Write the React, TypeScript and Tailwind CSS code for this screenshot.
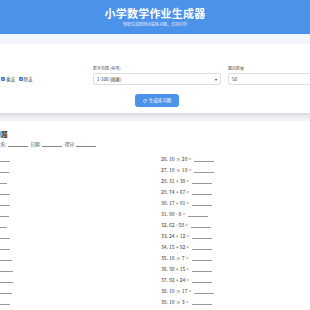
import { RotateCw } from "lucide-react"

const font = { fontFamily: '"Noto Sans CJK SC", "Noto Sans", sans-serif' }

const ops = ["加法", "减法", "乘法", "除法"]

const questions: string[] = [
  "12 + 35", "48 - 19", "7 × 8", "56 ÷ 7", "23 + 64",
  "81 - 27", "9 × 6", "45 + 38", "72 ÷ 8", "66 - 41",
  "14 × 5", "39 + 47", "90 - 36", "8 × 9", "27 + 58",
  "63 ÷ 9", "55 - 18", "16 × 4", "32 + 49", "84 - 29",
  "6 × 7", "21 + 76", "48 ÷ 6", "70 - 45", "13 × 3",
  "10 × 20", "19 × 18", "31 + 38", "74 + 67", "17 + 91",
  "90 - 8", "62 - 58", "24 + 12", "15 + 92", "18 × 7",
  "30 + 15", "92 + 24", "19 × 17", "10 × 3", "44 - 26",
  "51 + 33", "12 × 6", "88 - 47", "36 ÷ 4", "25 + 69",
  "73 - 38", "11 × 9", "64 + 27", "95 - 59", "40 ÷ 5",
]

const Item = ({ n, q }: { n: number; q: string }) => (
  <div className="flex h-[11px] items-center text-[5px] text-[#333]">
    <span className="whitespace-nowrap">
      {n}. {q} =
    </span>
    <span className="ml-[3px] mt-[5px] inline-block w-[20px] border-b border-[#999]" />
  </div>
)

const Blank = () => <span className="mr-[2px] inline-block w-[20px] border-b border-[#888]" />

export default function App() {
  return (
    <div className="min-h-[310px] w-full overflow-hidden bg-[#f3f6fa]" style={font}>
      <header className="flex h-[34px] flex-col items-center justify-center bg-[#4a92ea] text-white">
        <h1 className="text-[11px] font-bold leading-[12px] tracking-[0.2px]">小学数学作业生成器</h1>
        <p className="mt-[3px] text-[4px] leading-[5px] text-white/85">轻松生成四则运算练习题，支持打印</p>
      </header>

      <div className="flex justify-center pt-[10px]">
        <div className="ml-[4px] w-[414px] shrink-0">
          {/* settings */}
          <section className="rounded-[4px] bg-white px-[8px] pb-[6px] pt-[22px] shadow-md">
            <div className="grid grid-cols-3 gap-x-[7px]">
              <div>
                <div className="text-[4px] leading-[5px] text-[#555]">运算类型</div>
                <div className="mt-[2px] flex h-[12px] items-center gap-[3.5px] pl-[8px]">
                  {ops.map((o) => (
                    <label key={o} className="flex items-center gap-[1px] text-[4.5px] text-[#333]">
                      <span className="flex h-[4px] w-[4px] items-center justify-center rounded-[1px] bg-[#2f7be5]">
                        <svg viewBox="0 0 10 10" className="h-[4px] w-[4px]">
                          <path d="M2 5.2 4.2 7.3 8 2.8" fill="none" stroke="white" strokeWidth="1.6" />
                        </svg>
                      </span>
                      {o}
                    </label>
                  ))}
                </div>
              </div>
              <div>
                <div className="text-[4px] leading-[5px] text-[#555]">数字范围 (每项)</div>
                <div className="mt-[2px] flex h-[12px] items-center justify-between rounded-[2px] border border-[#ddd] px-[3px] text-[4.5px] text-[#333]">
                  <span>1-100 (困难)</span>
                  <span className="text-[4px]">▾</span>
                </div>
              </div>
              <div>
                <div className="text-[4px] leading-[5px] text-[#555]">题目数量</div>
                <div className="mt-[2px] flex h-[12px] items-center rounded-[2px] border border-[#ddd] px-[3px] text-[4.5px] text-[#333]">
                  50
                </div>
              </div>
            </div>
            <div className="mt-[9px] flex justify-center">
              <button className="flex h-[13px] items-center gap-[2px] rounded-[3px] bg-[#4a92ea] px-[8px] text-[4.5px] text-white">
                <RotateCw className="h-[4px] w-[4px]" strokeWidth={3} />
                生成练习题
              </button>
            </div>
          </section>

          {/* worksheet */}
          <section className="mt-[8px] rounded-[4px] bg-white px-[12px] pb-[10px] pt-[9px] shadow-md">
            <h2 className="text-[6.5px] font-bold leading-[9px] text-[#222]">小学数学练习题</h2>
            <div className="mt-[3px] flex items-end gap-[1px] text-[4.5px] leading-[5px] text-[#444]">
              <span>班级:</span>
              <Blank />
              <span>姓名:</span>
              <Blank />
              <span>日期:</span>
              <Blank />
              <span>得分:</span>
              <Blank />
            </div>
            <div className="mt-[6px] grid grid-cols-2 gap-x-[8px]">
              <div>
                {questions.slice(0, 25).map((q, i) => (
                  <Item key={i} n={i + 1} q={q} />
                ))}
              </div>
              <div>
                {questions.slice(25).map((q, i) => (
                  <Item key={i} n={i + 26} q={q} />
                ))}
              </div>
            </div>
          </section>
        </div>
      </div>
    </div>
  )
}
